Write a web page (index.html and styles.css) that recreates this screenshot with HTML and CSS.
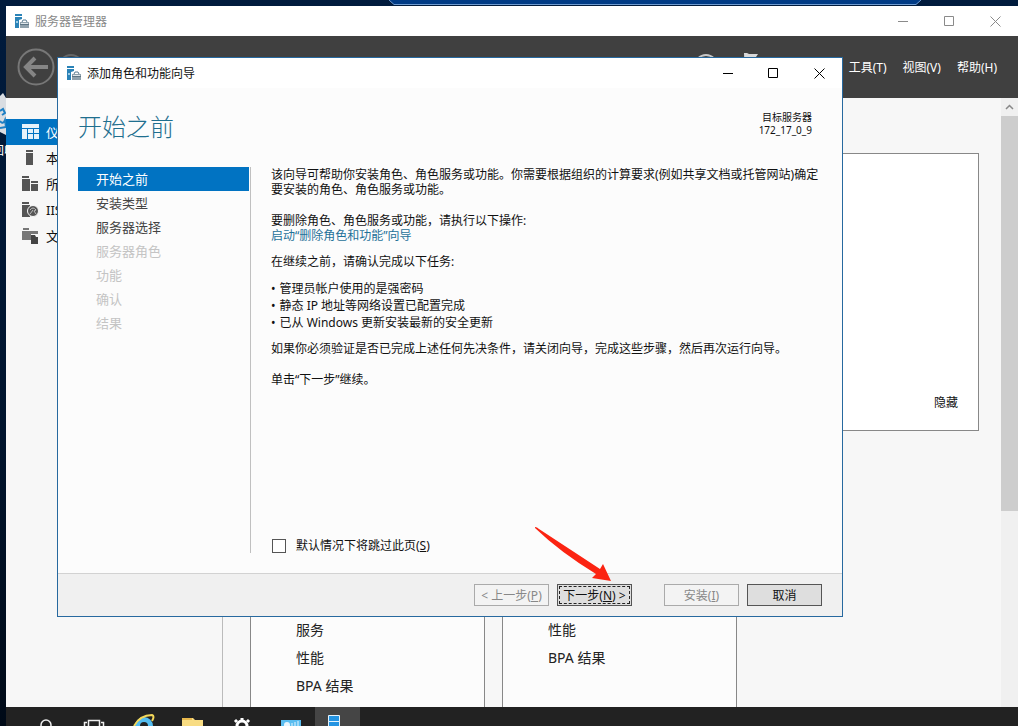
FILE: index.html
```html
<!DOCTYPE html>
<html lang="zh-CN">
<head>
<meta charset="utf-8">
<title>服务器管理器</title>
<link rel="stylesheet" href="styles.css">
</head>
<body>
<div class="desktop">
  <div class="connection-bar"><svg width="532" height="5" viewBox="0 0 532 5"><path d="M0 0H532L527 4.5H5Z" fill="#003b85"/><path d="M0 0L5 4.500H527L532 0" fill="none" stroke="#6f9bd0"/></svg></div>
  <div class="recycle-bin">
    <svg width="6" height="42" viewBox="0 0 6 42"><path d="M0 3L3 0L6 5V42L0 39Z" fill="#d9dde2"/><path d="M0 18L3 16L5 20L2 22M0 28Q3 32 5 27L6 34L0 35" fill="none" stroke="#1d7fc4" stroke-width="2"/></svg>
    <span class="bin-label">回收站</span>
  </div>

  <section class="window manager">
    <header class="titlebar inactive">
      <svg class="app-icon" width="15" height="15" viewBox="0 0 15 15"><path d="M0 0H7V2H0ZM0 3H7V5L4 6V14H0Z" fill="#2a83b8"/><path d="M1 7H3V9H1Z" fill="#9ccbe6"/><path d="M7 8L8 6H11L12 8" fill="none" stroke="#597b91"/><path d="M5 8H14V14H5Z" fill="#8fa1ac"/><path d="M5 10.500H14" stroke="#5d7584"/><path d="M6 9.500H13" stroke="#dce5ea"/></svg>
      <h1 class="window-title">服务器管理器</h1>
      <div class="window-controls">
        <button aria-label="最小化"><svg width="11" height="11" viewBox="0 0 11 11"><path d="M0 5.500H10"/></svg></button>
        <button aria-label="最大化"><svg width="11" height="11" viewBox="0 0 11 11"><path d="M.5 .5H9.500V9.500H.5Z"/></svg></button>
        <button aria-label="关闭"><svg width="11" height="11" viewBox="0 0 11 11"><path d="M.5 .5L10.500 10.500M10.500 .5L.5 10.500"/></svg></button>
      </div>
    </header>
    <div class="banner">
      <button class="nav-button" aria-label="后退"><svg width="38" height="38" viewBox="0 0 38 38" fill="none"><circle cx="19" cy="19" r="17.500" stroke="#777" stroke-width="2"/><path d="M31 19H10M18 10L9 19L18 28" stroke="#858585" stroke-width="4"/></svg></button>
      <button class="nav-button" aria-label="前进"><svg width="28" height="28" viewBox="0 0 28 28"><circle cx="14" cy="14" r="12" fill="none" stroke="#666" stroke-width="2"/></svg></button>
      <span class="crumb">服务器管理器 ▸ 仪表板</span>
      <svg class="banner-icons" width="76" height="30" viewBox="0 0 76 30"><circle cx="13" cy="14" r="11" fill="none" stroke="#c8c8c8" stroke-width="2"/><path d="M51 1H54L56 2H65L63 5V13H54V30H52Z" fill="#d8d8d8"/></svg>
      <nav class="menu"><button>工具(T)</button><button>视图(V)</button><button>帮助(H)</button></nav>
    </div>
    <div class="manager-body">
      <nav class="side-nav">
        <a class="side-item selected" href="#"><svg width="18" height="16" viewBox="0 0 18 16" fill="#e6f2fa"><path d="M0 0H17V4H0ZM0 5H5V15H0ZM6 5H11V9H6ZM12 5H17V9H12ZM6 10H11V15H6ZM12 10H17V15H12Z"/></svg>仪表板</a>
        <a class="side-item" href="#"><svg width="18" height="16" viewBox="0 0 18 16" fill="#555"><path d="M4 0H11V2H4ZM4 3H11V15H4Z"/></svg>本地服务器</a>
        <a class="side-item" href="#"><svg width="18" height="16" viewBox="0 0 18 16" fill="#555"><path d="M0 0H7V2H0ZM0 3H8V15H0ZM9 5H16V7H9ZM9 8H16V15H9Z"/></svg>所有服务器</a>
        <a class="side-item" href="#"><svg width="18" height="16" viewBox="0 0 18 16" fill="#555"><path d="M0 0H7V2H0ZM0 3H8V15H0Z"/><circle cx="11" cy="9" r="5.500" stroke="#f8f8f8"/><path d="M8 8Q11 4 14 8L12 9L14 12M11 8L8 12" fill="none" stroke="#bbb"/></svg>IIS</a>
        <a class="side-item" href="#"><svg width="18" height="16" viewBox="0 0 18 16" fill="#777"><path d="M1 0H7V2H1ZM0 3H16V6H9V12H0Z"/><path d="M9 7H13L14 9H16V16H9Z" fill="#444"/></svg>文件和存储服务</a>
      </nav>
      <main class="dashboard">
        <div class="welcome"><button class="hide-button">隐藏</button></div>
        <div class="tiles">
          <ul class="tile"><li>服务</li><li>性能</li><li>BPA 结果</li></ul>
          <ul class="tile"><li>性能</li><li>BPA 结果</li></ul>
        </div>
      </main>
      <div class="scrollbar"><span class="scroll-up"><svg width="9" height="6" viewBox="0 0 9 6"><path d="M1 5L4.500 1.500L8 5" fill="none" stroke="#888" stroke-width="1.500"/></svg></span><span class="scroll-thumb"></span></div>
    </div>
  </section>

  <section class="window wizard" role="dialog" aria-labelledby="wizard-title">
    <header class="titlebar">
      <svg class="app-icon" width="15" height="15" viewBox="0 0 15 15"><path d="M0 0H7V2H0ZM0 3H7V5L4 6V14H0Z" fill="#2a83b8"/><path d="M1 7H3V9H1Z" fill="#9ccbe6"/><path d="M7 8L8 6H11L12 8" fill="none" stroke="#597b91"/><path d="M5 8H14V14H5Z" fill="#8fa1ac"/><path d="M5 10.500H14" stroke="#5d7584"/><path d="M6 9.500H13" stroke="#dce5ea"/></svg>
      <h2 class="window-title" id="wizard-title">添加角色和功能向导</h2>
      <div class="window-controls">
        <button aria-label="最小化"><svg width="11" height="11" viewBox="0 0 11 11"><path d="M1 5.500H11"/></svg></button>
        <button aria-label="最大化"><svg width="11" height="11" viewBox="0 0 11 11"><path d="M.5 .5H9.500V9.500H.5Z"/></svg></button>
        <button aria-label="关闭"><svg width="11" height="11" viewBox="0 0 11 11"><path d="M.5 .5L10.500 10.500M10.500 .5L.5 10.500"/></svg></button>
      </div>
    </header>
    <div class="wizard-head">
      <h3 class="page-title">开始之前</h3>
      <p class="target">目标服务器<br>172_17_0_9</p>
    </div>
    <div class="wizard-body">
      <ol class="steps">
        <li class="step current">开始之前</li>
        <li class="step">安装类型</li>
        <li class="step">服务器选择</li>
        <li class="step disabled">服务器角色</li>
        <li class="step disabled">功能</li>
        <li class="step disabled">确认</li>
        <li class="step disabled">结果</li>
      </ol>
      <div class="page">
        <p class="spaced">该向导可帮助你安装角色、角色服务或功能。你需要根据组织的计算要求(例如共享文档或托管网站)确定要安装的角色、角色服务或功能。</p>
        <p class="tight">要删除角色、角色服务或功能，请执行以下操作:<br><a class="link" href="#">启动“删除角色和功能”向导</a></p>
        <p class="tight">在继续之前，请确认完成以下任务:</p>
        <ul class="tasks">
          <li>管理员帐户使用的是强密码</li>
          <li>静态 IP 地址等网络设置已配置完成</li>
          <li>已从 Windows 更新安装最新的安全更新</li>
        </ul>
        <p class="spaced">如果你必须验证是否已完成上述任何先决条件，请关闭向导，完成这些步骤，然后再次运行向导。</p>
        <p>单击“下一步”继续。</p>
        <label class="skip"><input type="checkbox" class="check"><span>默认情况下将跳过此页(<u>S</u>)</span></label>
      </div>
    </div>
    <footer class="actions">
      <button class="action" disabled>&lt; 上一步(<u>P</u>)</button>
      <button class="action focused">下一步(<u>N</u>) &gt;</button>
      <button class="action install" disabled>安装(<u>I</u>)</button>
      <button class="action">取消</button>
    </footer>
    <svg class="pointer" width="78" height="56" viewBox="0 0 78 56"><path d="M0 0Q2 0 4 2L65 42L68 37L76 54L57 51L61 47Q25 25 0 1Z" fill="#fb2412"/></svg>
  </section>

  <div class="taskbar">
    <span class="task"><svg width="24" height="19" viewBox="0 0 24 19"><circle cx="12" cy="18" r="5" fill="none" stroke="#eee" stroke-width="1.500"/></svg></span>
    <span class="task"><svg width="24" height="19" viewBox="0 0 24 19"><path d="M5.500 19V13.500H16.500V19M4 15.500H1.500V19M18 15.500H20.500V19" fill="none" stroke="#eee" stroke-width="1.500"/></svg></span>
    <span class="task"><svg width="24" height="19" viewBox="0 0 24 19"><path d="M3 19A9 9 0 0 1 21 19H16A4 4 0 0 0 8 19Z" fill="#54bdf0"/><path d="M2 19Q8 8 20 8Q23 9 20 14" fill="none" stroke="#f3d75a" stroke-width="2"/></svg></span>
    <span class="task"><svg width="24" height="19" viewBox="0 0 24 19"><path d="M1 11H12L14 13H22V19H1Z" fill="#f8dc83"/><path d="M1 11H11V13H1Z" fill="#e9b94d"/></svg></span>
    <span class="task"><svg width="24" height="19" viewBox="0 0 24 19"><circle cx="12" cy="19" r="5" fill="none" stroke="#fff" stroke-width="3"/><path d="M12 14V11M7 15L5 13M17 15L19 13" stroke="#fff" stroke-width="3"/></svg></span>
    <span class="task"><svg width="24" height="19" viewBox="0 0 24 19"><path d="M2 13H22V19H2Z" fill="#5abdf0"/><circle cx="8" cy="18" r="3" fill="#e8f5fc"/><path d="M13 19V16M16 19V15M19 19V14" stroke="#e8f5fc"/></svg></span>
    <span class="task open"><svg width="24" height="19" viewBox="0 0 24 19"><path d="M6.500 8.500H17.500V14.500H6.500ZM6.500 14.500H17.500V20H6.500Z" fill="#2494e2" stroke="#e5f3fc"/></svg></span>
  </div>
</div>
</body>
</html>
```
FILE: styles.css
```css
* { box-sizing: border-box; }

body {
  margin: 0;
  font: 12px/15px "Noto Sans", "Noto Sans CJK SC", sans-serif;
  color: #111;
}

h1, h2, h3, p, ul, ol { margin: 0; padding: 0; font-weight: 400; }
ul, ol { list-style: none; }
button { font: inherit; color: inherit; padding: 0; border: 0; background: none; white-space: nowrap; }
a { color: inherit; text-decoration: none; }
svg { display: block; flex: none; }

.desktop {
  position: relative;
  height: 100vh;
  overflow: hidden;
  background: linear-gradient(#001b3d, #00142d 60%, #000a17);
}

.connection-bar { position: absolute; top: 0; left: 389px; }
.recycle-bin { position: absolute; top: 93px; left: 0; width: 6px; overflow: hidden; }
.bin-label { display: block; margin: 8px 0 0 -8px; white-space: nowrap; color: #fff; }

.window { position: absolute; display: flex; flex-direction: column; }

.titlebar {
  display: flex;
  flex: none;
  align-items: center;
  gap: 5px;
  height: 30px;
  padding-left: 9px;
  background: #fff;
}
.window-title { flex: 1; font-size: 12px; color: #111; }
.inactive .window-title { color: #888; }
.window-controls { display: flex; }
.window-controls button { display: grid; place-items: center; width: 46px; height: 28px; }
.window-controls path { fill: none; stroke: #000; }
.inactive .window-controls path { stroke: #8a8a8a; }

/* Server manager */
.manager { top: 6px; right: 0; bottom: 0; left: 6px; background: #f7f7f7; }
.banner {
  display: flex;
  flex: none;
  align-items: center;
  height: 62px;
  padding: 0 21px 0 11px;
  background: #404040;
  color: #fff;
}
.nav-button + .nav-button { margin-left: 2px; }
.crumb { margin-left: 20px; padding-top: 8px; font-size: 24px; line-height: 30px; white-space: nowrap; }
.banner-icons { margin-left: auto; }
.menu { display: flex; gap: 16px; margin-left: 80px; }

.manager-body { display: flex; flex: 1; min-height: 0; }
.side-nav { flex: none; width: 217px; padding-top: 21px; border-right: 1px solid #bbb; }
.side-item { display: flex; align-items: center; gap: 6px; height: 26px; padding-left: 16px; font-size: 13px; }
.side-item.selected { background: #0173c2; color: #fff; }
.dashboard { flex: 1; min-width: 0; padding: 55px 22px 0 27px; }
.welcome {
  display: flex;
  align-items: flex-end;
  justify-content: flex-end;
  height: 278px;
  padding: 20px;
  border: 1px solid #888;
  background: #fff;
}
.tiles { display: flex; gap: 17px; height: 300px; margin-top: 60px; }
.tile { width: 235px; padding: 124px 45px 0; border: 1px solid #888; background: #fcfcfc; font-size: 14px; line-height: 28px; color: #222; }

.scrollbar { display: flex; flex: none; flex-direction: column; width: 17px; background: #f0f0f0; }
.scroll-up { display: grid; place-items: center; height: 18px; }
.scroll-thumb { height: 395px; background: #cdcdcd; }

/* Wizard */
.wizard {
  top: 57px;
  left: 57px;
  width: 786px;
  height: 560px;
  border: 1px solid #27699f;
  background: #fcfcfc;
}
.wizard-head { display: flex; justify-content: space-between; padding: 23px 30px 0 20px; height: 79px; }
.page-title { font-size: 24px; line-height: 32px; font-weight: 300; color: #1f6f8f; }
.target { font-size: 10px; line-height: 13px; text-align: right; }

.wizard-body { display: flex; flex: 1; padding: 0 20px 20px; }
.steps { flex: none; width: 173px; padding-right: 1px; border-right: 1px solid #c0c0c0; }
.step { height: 24px; padding-left: 18px; font-size: 13px; line-height: 24px; color: #444; }
.step.current { background: #0173c2; color: #fff; }
.step.disabled { color: #c4c4c4; }

.page { display: flex; flex: 1; flex-direction: column; padding-left: 20px; }
.spaced { margin-bottom: 16px; }
.tight { margin-bottom: 11px; }
.link { color: #1f7199; }
.tasks { margin-bottom: 10px; line-height: 17px; }
.tasks li { display: flex; gap: 4px; }
.tasks li::before { content: "•"; }
.skip { display: flex; align-items: center; gap: 10px; margin-top: auto; }
.check { appearance: none; width: 14px; height: 14px; margin: 0 0 0 1px; border: 1px solid #555; background: #fff; }

.actions {
  display: flex;
  flex: none;
  justify-content: flex-end;
  gap: 8px;
  padding: 10px 20px;
  border-top: 1px solid #d2d2d2;
  background: #f0f0f0;
}
.action { width: 75px; height: 22px; border: 1px solid #555; background: #dedede; }
.action:disabled { border-color: #aaa; background: #f3f3f3; color: #888; }
.action.focused { outline: 1px dashed #222; outline-offset: -3px; }
.action.install { margin-left: 24px; }
.pointer { position: absolute; top: 469px; left: 477px; }

/* Taskbar */
.taskbar {
  position: absolute;
  right: 0;
  bottom: 0;
  left: 6px;
  display: flex;
  height: 19px;
  padding-left: 15px;
  background: #222;
}
.task { display: grid; place-items: center; width: 49px; }
.task.open { width: 45px; padding-right: 8px; background: #454545; }
```
